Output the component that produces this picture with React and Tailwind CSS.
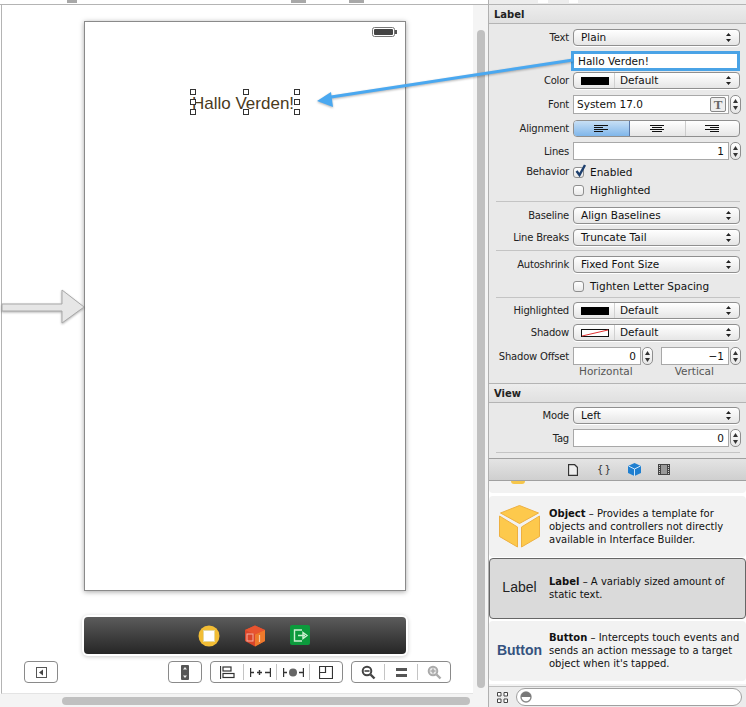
import React from "react";

const font = { fontFamily: '"DejaVu Sans", sans-serif' };

function Arrows() {
  return (
    <svg width="7" height="11" viewBox="0 0 7 11" className="shrink-0">
      <path d="M3.5 1 L6 4 H1 Z M3.5 10 L6 7 H1 Z" fill="#222" />
    </svg>
  );
}

function Swatch({ none }) {
  return (
    <div className="flex items-center h-full">
      <svg width="28" height="8" viewBox="0 0 28 8" className="ml-[7px] mr-[5px]">
        {none ? (
          <>
            <rect x="0.5" y="0.5" width="27" height="7" fill="#fff" stroke="#111" />
            <path d="M1 7 L27 1" stroke="#e03030" />
          </>
        ) : (
          <rect width="28" height="8" fill="#000" />
        )}
      </svg>
      <div className="w-px h-full bg-[#d0d0d0] mr-[5px]" />
    </div>
  );
}

function Popup({ text, swatch, none }) {
  return (
    <div className="w-[167px] h-[17px] flex items-center rounded-[4px] border border-[#8f8f8f] bg-gradient-to-b from-white to-[#e6e6e6] pr-[7px] shadow-[0_1px_0_#fff]">
      {swatch ? <Swatch none={none} /> : <div className="w-[7px]" />}
      <span className="flex-1 text-[10.5px] leading-none text-[#111]">{text}</span>
      <Arrows />
    </div>
  );
}

function Stepper() {
  return (
    <div className="w-[11px] h-full flex flex-col items-center justify-center gap-[3px] rounded-[5px] border border-[#8f8f8f] bg-gradient-to-b from-white to-[#e6e6e6]">
      <svg width="5" height="4" viewBox="0 0 5 4"><path d="M2.5 0 L5 4 H0 Z" fill="#333" /></svg>
      <svg width="5" height="4" viewBox="0 0 5 4"><path d="M2.5 4 L5 0 H0 Z" fill="#333" /></svg>
    </div>
  );
}

function Row({ label, className, drop, children }) {
  return (
    <div className={"flex items-center " + className}>
      <div className={"w-[80px] text-right text-[10px] tracking-[-0.2px] leading-none text-[#222] whitespace-nowrap " + (drop ? "pt-[2px]" : "")}>{label}</div>
      <div className="ml-[4px] flex items-center h-full">{children}</div>
    </div>
  );
}

function Check({ on, text }) {
  return (
    <div className="flex items-center gap-[6px]">
      <div className="relative w-[11px] h-[11px] rounded-[3px] border border-[#8f8f8f] bg-gradient-to-b from-white to-[#e8e8e8]">
        {on && (
          <svg width="14" height="15" viewBox="0 0 14 15" className="absolute -top-[5px] left-0">
            <path d="M2.5 8 L5.5 12 L11 2" fill="none" stroke="#1d3f6e" strokeWidth="2.4" />
          </svg>
        )}
      </div>
      <span className="text-[10.5px] leading-none text-[#111]">{text}</span>
    </div>
  );
}

function Sep({ className }) {
  return <div className={"h-px ml-[7px] mr-[6px] bg-[#c4c4c4] " + className} />;
}

function AlignIcon({ mode }) {
  return (
    <svg width="15" height="7" viewBox="0 0 15 7">
      <path d={mode === "left" ? "M0 .5H14M0 2.5H9M0 4.5H14M0 6.5H9" : mode === "center" ? "M0 .5H14M2 2.5H12M0 4.5H14M2 6.5H12" : "M0 .5H14M5 2.5H14M0 4.5H14M5 6.5H14"} stroke="#111" />
    </svg>
  );
}

function Section({ title, className }) {
  return (
    <div className={"h-[20px] flex items-center pl-[5px] pt-[1px] border-y border-[#b4b4b4] bg-gradient-to-b from-[#ededed] to-[#e0e0e0] text-[10px] font-bold text-[#222] " + className}>
      {title}
    </div>
  );
}

function NumberField({ value, w }) {
  return (
    <div className={"h-[18px] flex items-center justify-end pr-[4px] border border-[#a8a8a8] bg-white text-[10.5px] leading-none text-[#111] " + w}>
      {value}
    </div>
  );
}

function LibraryCard({ active, icon, title, desc, className }) {
  return (
    <div className={"flex items-center rounded-[4px] border " + (active ? "bg-[#dadada] border-[#666] " : "bg-[#f2f2f2] border-transparent ") + className}>
      <div className="w-[59px] shrink-0 flex justify-center">{icon}</div>
      <p className="text-[10px] leading-[13px] text-[#111] pr-[4px]">
        <b>{title}</b> – {desc}
      </p>
    </div>
  );
}

function Tool({ children, className }) {
  return (
    <div className={"h-[22px] flex items-center rounded-[4px] border border-[#8a8a8a] bg-white divide-x divide-[#c4c4c4] " + className}>
      {children}
    </div>
  );
}

function ToolCell({ children }) {
  return <div className="flex-1 h-[16px] flex items-center justify-center">{children}</div>;
}

function Zoom({ sign, color }) {
  return (
    <svg width="15" height="15" viewBox="0 0 15 15">
      <circle cx="6" cy="6" r="4.3" fill={sign === "plus" ? "#e8e8e8" : "#fff"} stroke={color} strokeWidth="2" />
      <path d="M9.5 9.5 L13.5 13.5" stroke={color} strokeWidth="2.4" />
      <path d={sign === "plus" ? "M3.5 6H8.5M6 3.5V8.5" : "M3.5 6H8.5"} stroke={color} strokeWidth="1.6" />
    </svg>
  );
}

export default function App() {
  return (
    <div className="relative w-[746px] h-[707px] overflow-hidden flex bg-white" style={font}>
      {/* Left: storyboard canvas */}
      <div className="w-[489px] h-full flex flex-col bg-[#f4f4f4] border-r border-[#b0b0b0]">
        <div className="h-[5px] shrink-0 flex border-b border-[#b4b4b4] bg-white">
          <div className="ml-[67px] w-[10px] h-[3px] bg-[#a8a8a8]" />
          <div className="ml-[214px] w-[15px] h-[3px] bg-[#a8a8a8]" />
          <div className="ml-[43px] w-[15px] h-[3px] bg-[#a8a8a8]" />
        </div>
        <div className="flex-1 flex min-h-0">
          <div className="w-[473px] pl-px bg-white shrink-0">
            <div className="h-full flex flex-col bg-white border-l border-[#b4b4b4] border-b border-b-[#e4e4e4]">
              <div className="relative ml-[82px] mt-[16px] w-[322px] h-[570px] shrink-0 border border-[#8a8a8a] bg-white shadow-[0_1px_5px_rgba(0,0,0,0.35)]">
                <svg width="25" height="10" viewBox="0 0 25 10" className="absolute top-[5px] right-[8px]">
                  <rect x="0.5" y="0.5" width="22" height="9" rx="2" fill="#fff" stroke="#777" />
                  <rect x="2" y="2" width="19" height="6" rx="1" fill="#444" />
                  <rect x="23" y="3" width="2" height="4" fill="#555" />
                </svg>
                <div className="mt-[69px] ml-[106px] w-[109px] h-[24px] relative">
                  <span className="absolute left-[1px] top-[2px] whitespace-nowrap text-[17px] leading-[22px] text-[#4a3a1c]" style={{ fontFamily: '"Liberation Sans", sans-serif' }}>
                    Hallo Verden!
                  </span>
                  {/* selection handles */}
                  <span className="absolute -left-px -top-[2px] w-[6px] h-[6px] bg-white border border-[#333]" />
                  <span className="absolute left-[52px] -top-[2px] w-[6px] h-[6px] bg-white border border-[#333]" />
                  <span className="absolute left-[103px] -top-[2px] w-[6px] h-[6px] bg-white border border-[#333]" />
                  <span className="absolute -left-px top-[8px] w-[6px] h-[6px] bg-white border border-[#333]" />
                  <span className="absolute left-[103px] top-[8px] w-[6px] h-[6px] bg-white border border-[#333]" />
                  <span className="absolute -left-px top-[18px] w-[6px] h-[6px] bg-white border border-[#333]" />
                  <span className="absolute left-[52px] top-[18px] w-[6px] h-[6px] bg-white border border-[#333]" />
                  <span className="absolute left-[103px] top-[18px] w-[6px] h-[6px] bg-white border border-[#333]" />
                </div>
              </div>
              {/* dock */}
              <div className="ml-[82px] mt-[26px] w-[322px] h-[37px] shrink-0 flex items-center rounded-[4px] bg-gradient-to-b from-[#5c5c5c] to-[#262626] shadow-[0_0_0_2px_#fff,0_1px_4px_2px_rgba(0,0,0,0.2)]">
                <svg width="22" height="22" viewBox="0 0 22 22" className="ml-[114px]">
                  <circle cx="11" cy="11" r="10.5" fill="#f2bd35" />
                  <rect x="5.5" y="5.5" width="11" height="11" fill="#fff" stroke="#e6d9a0" />
                </svg>
                <svg width="22" height="22" viewBox="0 0 22 22" className="ml-[24px]">
                  <path d="M11 0.5 L21 5 V16 L11 21.5 L1 16 V5 Z" fill="#d9452a" />
                  <path d="M1 5 L11 9.5 L21 5 L11 0.5 Z" fill="#e8542f" />
                  <path d="M11 9.5 V21.5 L21 16 V5 Z" fill="#ee7a2c" />
                  <rect x="3" y="9" width="6" height="7" fill="none" stroke="#f5b0a0" />
                  <path d="M15.5 10 V17" stroke="#f8c9a0" strokeWidth="1.2" />
                </svg>
                <svg width="21" height="21" viewBox="0 0 21 21" className="ml-[24px]">
                  <rect width="20" height="20" rx="2" fill="#0c9a3c" />
                  <path d="M12 5 H4.5 V16 H12 M8 10.5 H15 M13 7.5 L17 10.5 L13 13.5 Z" fill="none" stroke="#c9f0cf" strokeWidth="1.4" />
                </svg>
              </div>
              {/* bottom toolbar */}
              <div className="mt-[7px] ml-[22px] flex">
                <Tool className="w-[34px] justify-center">
                  <svg width="11" height="11" viewBox="0 0 11 11">
                    <rect x="0.5" y="0.5" width="10" height="10" fill="#fff" stroke="#555" />
                    <path d="M7 2.5 V8.5 L3 5.5 Z" fill="#444" />
                  </svg>
                </Tool>
                <Tool className="ml-[110px] w-[34px] justify-center">
                  <svg width="8" height="15" viewBox="0 0 8 15">
                    <rect width="8" height="15" rx="1" fill="#555" />
                    <path d="M4 2 L6 4.5 H2 Z M4 13 L6 10.5 H2 Z" fill="#eee" />
                  </svg>
                </Tool>
                <Tool className="ml-[8px] w-[133px]">
                  <ToolCell>
                    <svg width="15" height="13" viewBox="0 0 15 13">
                      <path d="M.5 0V13" stroke="#333" strokeWidth="1.2" />
                      <rect x="3" y="1" width="8" height="4" fill="#fff" stroke="#333" strokeWidth="1.2" />
                      <rect x="3" y="7.5" width="11" height="4" fill="#fff" stroke="#333" strokeWidth="1.2" />
                    </svg>
                  </ToolCell>
                  <ToolCell>
                    <svg width="21" height="11" viewBox="0 0 21 11">
                      <path d="M.5 1V10M.5 5.5H4M7 5.5H12M9.5 3V8M15 5.5H20M20.5 1V10" stroke="#333" strokeWidth="1.4" fill="none" />
                    </svg>
                  </ToolCell>
                  <ToolCell>
                    <svg width="21" height="11" viewBox="0 0 21 11">
                      <path d="M.5 1V10M.5 5.5H4M16 5.5H20M20.5 1V10" stroke="#333" strokeWidth="1.4" fill="none" />
                      <circle cx="10" cy="5.5" r="4" fill="#666" />
                    </svg>
                  </ToolCell>
                  <ToolCell>
                    <svg width="14" height="13" viewBox="0 0 14 13">
                      <path d="M.5 .5H13.5V12.5H.5Z" fill="#fff" stroke="#333" strokeWidth="1.2" />
                      <path d="M.5 6.5H6.5V.5" fill="none" stroke="#333" strokeWidth="1.2" />
                    </svg>
                  </ToolCell>
                </Tool>
                <Tool className="ml-[8px] w-[100px]">
                  <ToolCell><Zoom sign="minus" color="#444" /></ToolCell>
                  <ToolCell>
                    <svg width="11" height="9" viewBox="0 0 11 9">
                      <rect width="11" height="3" fill="#555" />
                      <rect y="6" width="11" height="3" fill="#555" />
                    </svg>
                  </ToolCell>
                  <ToolCell><Zoom sign="plus" color="#aaa" /></ToolCell>
                </Tool>
              </div>
            </div>
          </div>
          <div className="flex-1 pt-[25px] pl-[4px]">
            <div className="w-[8px] h-[658px] rounded-full bg-[#c0c0c0]" />
          </div>
        </div>
        <div className="h-[13px] shrink-0 pl-[62px] pt-[3px]">
          <div className="w-[408px] h-[8px] rounded-full bg-[#c0c0c0]" />
        </div>
      </div>

      {/* Right: inspector + library */}
      <div className="flex-1 flex flex-col h-full bg-[#e9e9e9] min-w-0">
        <div className="h-[4px] shrink-0 flex bg-[#ededed]">
          <div className="ml-[49px] w-[10px] h-[3px] bg-white" />
          <div className="ml-[21px] w-[9px] h-[3px] bg-white" />
        </div>
        <Section title="Label" />
        <Row label="Text" className="mt-[5px] h-[17px]"><Popup text="Plain" /></Row>
        <div className="ml-[82px] mt-[5px] w-[169px] h-[20px] flex items-center pl-[4px] border-[3px] border-[#4aa3e6] bg-white text-[10.5px] leading-none text-[#111]">Hallo Verden!</div>
        <Row label="Color" className="mt-[1px] h-[17px]"><Popup text="Default" swatch /></Row>
        <Row label="Font" className="mt-[6px] h-[19px]">
          <div className="w-[156px] h-[19px] flex items-center pl-[3px] pr-[2px] border border-[#a8a8a8] bg-white text-[10.5px] leading-none text-[#111]">
            <span className="flex-1">System 17.0</span>
            <div className="w-[16px] h-[15px] flex items-center justify-center border border-[#888] rounded-[2px] bg-[#eee] text-[13px] font-bold text-[#666]" style={{ fontFamily: '"Liberation Serif", serif' }}>T</div>
          </div>
          <div className="ml-[1px] h-full"><Stepper /></div>
        </Row>
        <Row label="Alignment" className="mt-[6px] h-[17px]">
          <div className="w-[167px] h-[17px] flex rounded-[4px] border border-[#8f8f8f] bg-gradient-to-b from-white to-[#e6e6e6] overflow-hidden">
            <div className="w-[56px] flex items-center justify-center border-r border-[#5a78a8] bg-gradient-to-b from-[#c7dff5] to-[#7fb6ea]"><AlignIcon mode="left" /></div>
            <div className="w-[56px] flex items-center justify-center border-r border-[#ccc]"><AlignIcon mode="center" /></div>
            <div className="flex-1 flex items-center justify-center"><AlignIcon mode="right" /></div>
          </div>
        </Row>
        <Row label="Lines" drop className="mt-[5px] h-[18px]">
          <NumberField value="1" w="w-[156px]" />
          <div className="ml-[1px] h-full"><Stepper /></div>
        </Row>
        <Row label="Behavior" className="mt-[4px] h-[16px]"><Check on text="Enabled" /></Row>
        <div className="ml-[84px] mt-[3px] h-[14px] flex items-center"><Check text="Highlighted" /></div>
        <Sep className="mt-[4px]" />
        <Row label="Baseline" className="mt-[5px] h-[17px]"><Popup text="Align Baselines" /></Row>
        <Row label="Line Breaks" className="mt-[5px] h-[17px]"><Popup text="Truncate Tail" /></Row>
        <Sep className="mt-[4px]" />
        <Row label="Autoshrink" className="mt-[5px] h-[17px]"><Popup text="Fixed Font Size" /></Row>
        <div className="ml-[84px] mt-[6px] h-[14px] flex items-center"><Check text="Tighten Letter Spacing" /></div>
        <Sep className="mt-[4px]" />
        <Row label="Highlighted" className="mt-[4px] h-[17px]"><Popup text="Default" swatch /></Row>
        <Row label="Shadow" className="mt-[5px] h-[17px]"><Popup text="Default" swatch none /></Row>
        <Row label="Shadow Offset" drop className="mt-[6px] h-[18px]">
          <NumberField value="0" w="w-[68px]" />
          <div className="ml-[1px] h-full"><Stepper /></div>
          <div className="w-[8px]" />
          <NumberField value="−1" w="w-[68px]" />
          <div className="ml-[1px] h-full"><Stepper /></div>
        </Row>
        <div className="ml-[90px] h-[13px] flex text-[10.5px] leading-[13px] text-[#555]">
          <span>Horizontal</span>
          <span className="ml-[42px]">Vertical</span>
        </div>
        <Section title="View" className="mt-[5px]" />
        <Row label="Mode" className="mt-[4px] h-[17px]"><Popup text="Left" /></Row>
        <Row label="Tag" drop className="mt-[5px] h-[18px]">
          <NumberField value="0" w="w-[156px]" />
          <div className="ml-[1px] h-full"><Stepper /></div>
        </Row>
        <Sep className="mt-[5px]" />
        <div className="h-[5px]" />
        {/* library tabs */}
        <div className="h-[23px] shrink-0 flex items-center border-y border-[#a0a0a0] bg-gradient-to-b from-[#e4e4e4] to-[#cfcfcf]">
          <svg width="10" height="12" viewBox="0 0 10 12" className="ml-[79px]">
            <path d="M.5 .5H6.5L9.5 3.5V11.5H.5Z" fill="#eee" stroke="#333" strokeWidth="1.3" />
          </svg>
          <span className="ml-[19px] w-[13px] text-[10px] text-[#333] leading-none tracking-[-1px] whitespace-nowrap">{"{ }"}</span>
          <svg width="13" height="13" viewBox="0 0 13 13" className="ml-[18px]">
            <path d="M6.5 0 L13 3 V10 L6.5 13 L0 10 V3 Z" fill="#1f7fd0" />
            <path d="M0.5 3 L6.5 6 L12.5 3 M6.5 6 V13" fill="none" stroke="#cfe6fa" />
          </svg>
          <svg width="12" height="11" viewBox="0 0 12 11" className="ml-[17px]">
            <rect width="12" height="11" fill="#444" />
            <rect x="3" y="1" width="6" height="9" fill="#999" />
            <path d="M1.5 1V10M10.5 1V10" stroke="#ccc" strokeDasharray="1 1" />
          </svg>
        </div>
        {/* library list */}
        <div className="flex-1 min-h-0 flex flex-col bg-white overflow-hidden">
          <div className="h-[12px] shrink-0 bg-[#f2f2f2] rounded-b-[4px] flex justify-start pl-[22px]">
            <div className="w-[14px] h-[3px] bg-[#f6c64a] rounded-b-full" />
          </div>
          <LibraryCard
            className="mt-[3px] h-[61px] shrink-0"
            icon={
              <svg width="41" height="43" viewBox="0 0 41 43">
                <path d="M20.5 .5 L39.5 8 L20.5 18.5 L1.5 8 Z" fill="#fdc94c" stroke="#eeb040" />
                <path d="M.5 11 L18.5 22 V42 L.5 31.5 Z" fill="#fdc94c" stroke="#eeb040" />
                <path d="M40.5 11 L22.5 22 V42 L40.5 31.5 Z" fill="#fdc94c" stroke="#eeb040" />
              </svg>
            }
            title="Object"
            desc="Provides a template for objects and controllers not directly available in Interface Builder."
          />
          <LibraryCard
            active
            className="mt-px h-[61px] shrink-0 pb-[2px]"
            icon={<span className="text-[14px] text-[#222]" style={{ fontFamily: '"Liberation Sans", sans-serif' }}>Label</span>}
            title="Label"
            desc="A variably sized amount of static text."
          />
          <LibraryCard
            className="mt-[2px] h-[60px] shrink-0 pb-[2px]"
            icon={<span className="text-[14px] font-bold text-[#35527f]" style={{ fontFamily: '"Liberation Sans", sans-serif' }}>Button</span>}
            title="Button"
            desc="Intercepts touch events and sends an action message to a target object when it's tapped."
          />
          <div className="mt-[3px] flex-1 bg-[#f2f2f2]" />
        </div>
        <div className="h-[21px] shrink-0 flex items-center border-t border-[#c0c0c0] bg-[#ececec]">
          <svg width="11" height="11" viewBox="0 0 11 11" className="ml-[8px]">
            <path d="M.5 .5H4V4H.5ZM7 .5H10.5V4H7ZM.5 7H4V10.5H.5ZM7 7H10.5V10.5H7Z" fill="#fff" stroke="#444" />
          </svg>
          <div className="ml-[8px] w-[226px] h-[18px] flex items-center pl-[3px] rounded-full border border-[#a0a0a0] bg-white">
            <svg width="12" height="12" viewBox="0 0 12 12">
              <circle cx="6" cy="6" r="5" fill="#fff" stroke="#888" strokeWidth="1.4" />
              <path d="M1 6 A5 5 0 0 1 11 6 Z" fill="#777" />
            </svg>
          </div>
        </div>
      </div>

      {/* annotation arrow + entry arrow drawn on top */}
      <svg width="746" height="707" viewBox="0 0 746 707" className="absolute inset-0 pointer-events-none">
        <g className="drop-shadow-[0_1px_1px_rgba(0,0,0,0.3)]">
          <path d="M573 60 L331 97" stroke="#4aa8f0" strokeWidth="3" fill="none" />
          <path d="M317 101 L331 92 L333 107 Z" fill="#4aa8f0" />
          <path d="M2 304 H62 V290 L84 307 L62 323 V311 H2 Z" fill="#e6e6e6" stroke="#a8a8a8" />
        </g>
      </svg>
    </div>
  );
}
